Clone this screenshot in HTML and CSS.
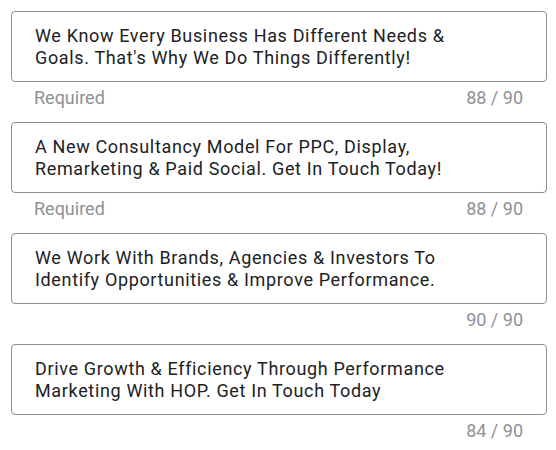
FILE: index.html
```html
<!DOCTYPE html>
<html>
<head>
<meta charset="utf-8">
<link rel="stylesheet" href="styles.css">
</head>
<body>
<div class="list">
  <div class="field">
    <div class="box">We Know Every Business Has Different Needs &amp; Goals. That's Why We Do Things Differently!</div>
    <div class="helper"><span class="hint">Required</span><span class="count">88 / 90</span></div>
  </div>
  <div class="field">
    <div class="box">A New Consultancy Model For PPC, Display, Remarketing &amp; Paid Social. Get In Touch Today!</div>
    <div class="helper"><span class="hint">Required</span><span class="count">88 / 90</span></div>
  </div>
  <div class="field">
    <div class="box">We Work With Brands, Agencies &amp; Investors To Identify Opportunities &amp; Improve Performance.</div>
    <div class="helper"><span class="hint"></span><span class="count">90 / 90</span></div>
  </div>
  <div class="field">
    <div class="box">Drive Growth &amp; Efficiency Through Performance Marketing With HOP. Get In Touch Today</div>
    <div class="helper"><span class="hint"></span><span class="count">84 / 90</span></div>
  </div>
</div>
</body>
</html>
```
FILE: styles.css
```css
html, body {
  margin: 0;
  padding: 0;
  background: #ffffff;
}
body {
  font-family: Roboto, "Liberation Sans", sans-serif;
  color: #202124;
}
.list {
  display: flex;
  flex-direction: column;
  padding: 11px 0 0 11px;
  width: 536px;
}
.field {
  display: flex;
  flex-direction: column;
}
.box {
  border: 1px solid #8a8d91;
  border-radius: 4px;
  padding: 13px 66px 12px 23px;
  font-size: 18px;
  line-height: 22px;
  letter-spacing: 0.65px;
  color: #202124;
}
.helper {
  display: flex;
  justify-content: space-between;
  padding: 6px 24px 14px 23px;
  font-size: 18px;
  line-height: 20px;
  color: #8f9194;
}
```
